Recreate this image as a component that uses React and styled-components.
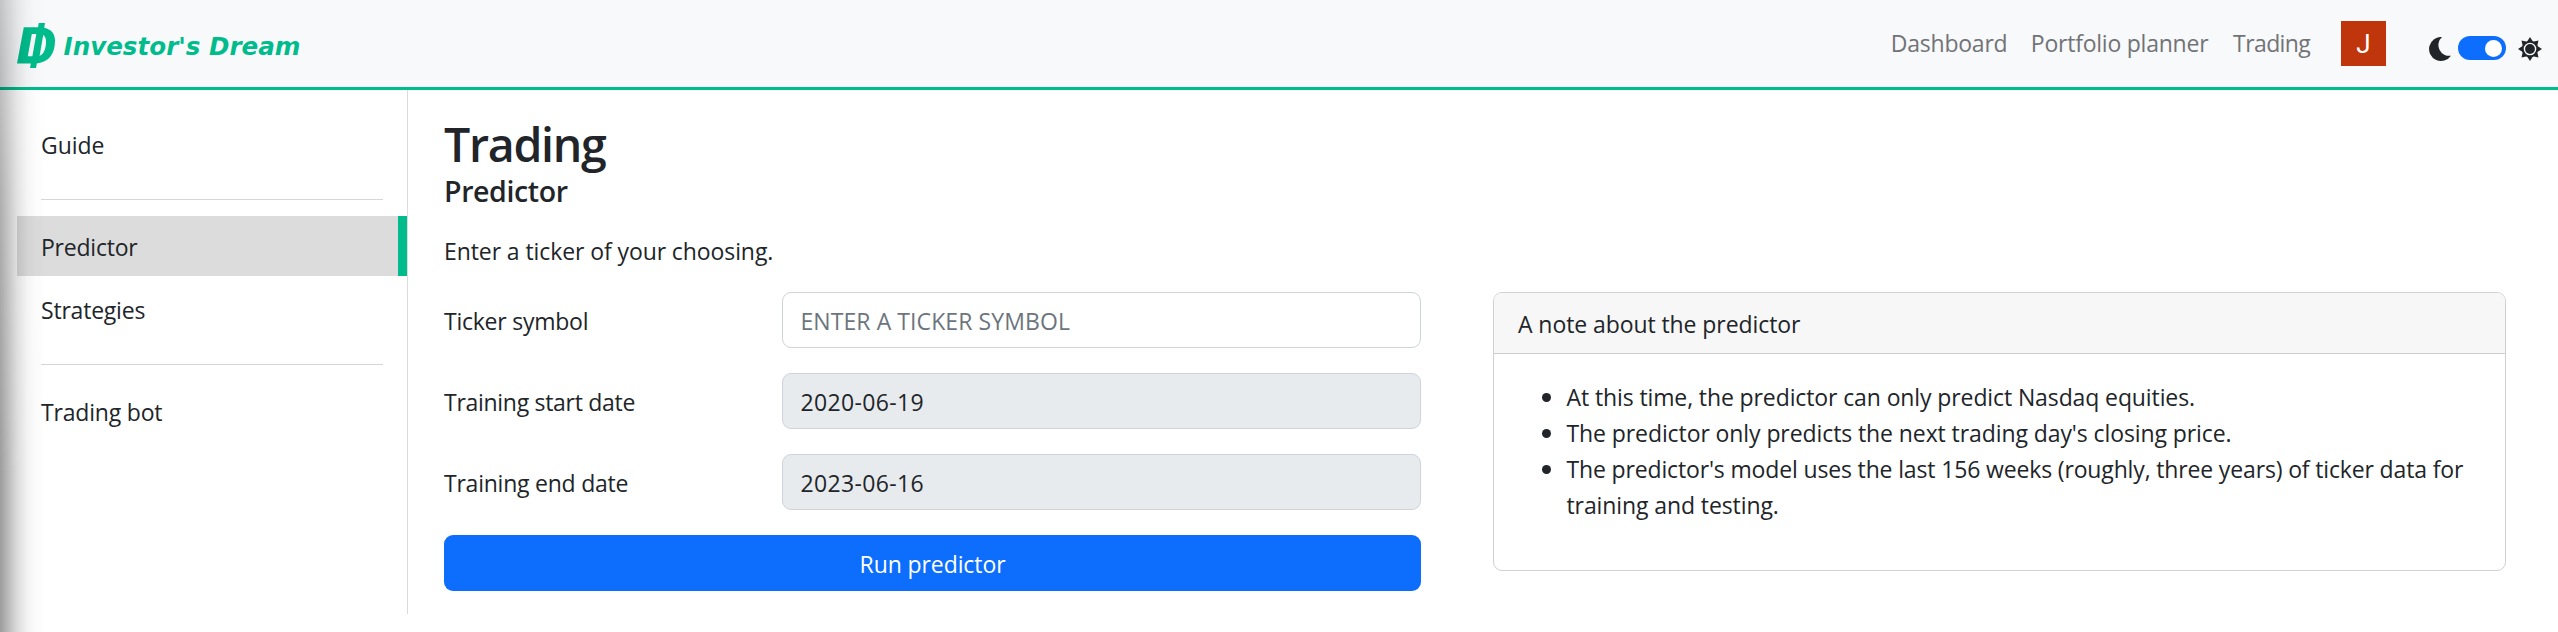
import React from 'react';
import styled, { createGlobalStyle } from 'styled-components';

const green = '#00bc8c';
const ink = '#212529';

const GlobalStyle = createGlobalStyle`
  *, *::before, *::after { box-sizing: border-box; }
  body {
    margin: 0;
    background: #fff;
    color: ${ink};
    font-family: 'Open Sans', 'Noto Sans', sans-serif;
    font-size: 23px;
    line-height: 36px;
  }
`;

const Page = styled.div`
  position: relative;
  height: 632px;
  overflow: hidden;
`;

/* Soft shade running down the left window edge */
const EdgeShade = styled.div`
  position: absolute;
  inset: 0 auto 0 0;
  width: 46px;
  pointer-events: none;
  background: linear-gradient(
    to right,
    rgba(0, 0, 0, 0.39) 0,
    rgba(0, 0, 0, 0.27) 8px,
    rgba(0, 0, 0, 0.14) 17px,
    rgba(0, 0, 0, 0.05) 27px,
    rgba(0, 0, 0, 0.015) 36px,
    rgba(0, 0, 0, 0) 46px
  );
  mask-image: linear-gradient(to bottom, rgba(0, 0, 0, 0.55) 0, rgba(0, 0, 0, 0.82) 200px, #000 480px);
`;

const Header = styled.header`
  display: flex;
  justify-content: space-between;
  height: 90px;
  padding: 0 16px 0 17px;
  background: #f8f9fb;
  border-bottom: 3px solid ${green};
`;

const Brand = styled.a`
  display: flex;
  align-items: flex-start;
  padding-top: 23px;
  color: ${green};
`;

const BrandName = styled.span`
  margin: 5px 0 0 7.5px;
  padding-top: 1px;
  font: italic bold 24.6px/36px 'DejaVu Sans', sans-serif;
  white-space: nowrap;
`;

const Nav = styled.nav`
  display: flex;
  align-items: flex-start;
`;

const NavLink = styled.a`
  width: ${(p) => p.$width}px;
  padding: 25px 0 0 0.4px;
  color: #717376;
  letter-spacing: ${(p) => p.$track}px;
  white-space: nowrap;
`;

const Avatar = styled.div`
  width: 45px;
  height: 45px;
  margin: 21px 43px 0 0;
  background: #bf360c;
  color: #fff;
  font: 26px/46px Roboto, sans-serif;
  text-align: center;
`;

const ThemeSwitch = styled.div`
  display: flex;
  align-items: center;
  height: 24px;
  margin-top: 36px;
`;

const Toggle = styled.div`
  display: flex;
  justify-content: flex-end;
  align-items: center;
  width: 48px;
  height: 24px;
  margin: 0 12px 0 7px;
  padding-right: 4px;
  border-radius: 12px;
  background: #0d6efd;
`;

const Knob = styled.span`
  width: 17px;
  height: 17px;
  border-radius: 50%;
  background: #fff;
`;

const IconWrap = styled.span`
  display: flex;
  padding-top: 2px;
`;

const Body = styled.div`
  display: flex;
`;

const Sidebar = styled.aside`
  width: 408px;
  height: 524px;
  padding: 24px 0 0 17px;
  border-right: 1px solid #dadbdd;
`;

const SideItem = styled.a`
  display: block;
  height: 60px;
  padding: 13px 24px 11px;
  letter-spacing: ${(p) => p.$track}px;
  background: ${(p) => (p.$active ? '#dcdcdc' : 'transparent')};
  border-right: 9px solid ${(p) => (p.$active ? green : 'transparent')};
  & + & { margin-top: 3px; }
`;

const Divider = styled.hr`
  height: 1px;
  margin: 25px 24px 16px;
  border: 0;
  background: #d6d7d8;
`;

const Main = styled.main`
  flex: 1;
  padding: 25px 52px 0 36px;
`;

const Title = styled.h1`
  margin: 0;
  font-size: 46.5px;
  font-weight: 600;
  line-height: 58px;
  letter-spacing: -1.3px;
`;

const Subtitle = styled.h5`
  margin: 0;
  font-size: 28.5px;
  font-weight: 600;
  line-height: 36px;
  letter-spacing: -0.38px;
`;

const Intro = styled.p`
  margin: 24px 0 23px;
  letter-spacing: -0.09px;
`;

const Columns = styled.div`
  display: flex;
  align-items: flex-start;
  gap: 72px;
`;

const Form = styled.form`
  display: flex;
  flex-direction: column;
  gap: 25px;
  width: 977px;
`;

const Field = styled.label`
  display: flex;
  height: 56px;
`;

const FieldLabel = styled.span`
  width: 338px;
  padding-top: 11px;
  letter-spacing: ${(p) => p.$track}px;
`;

const Input = styled.input`
  flex: 1;
  height: 56px;
  padding: 2px 17.4px 0;
  border: 1px solid #ced4da;
  border-radius: 9px;
  background: #fff;
  color: ${ink};
  font: inherit;
  letter-spacing: ${(p) => p.$track}px;
  &::placeholder { color: #6c757d; opacity: 1; }
  &:disabled { background: #e8ebee; }
`;

const RunButton = styled.button`
  height: 56px;
  padding: 1px 0 0;
  border: 0;
  border-radius: 9px;
  background: #0d6efd;
  color: #fff;
  font: inherit;
  letter-spacing: -0.09px;
`;

const Card = styled.section`
  width: 1013px;
  height: 279px;
  border: 1px solid #d0d1d2;
  border-radius: 9px;
  overflow: hidden;
`;

const CardHeader = styled.div`
  height: 61px;
  padding: 13px 24px 0;
  background: #f7f7f7;
  border-bottom: 1px solid #cdcecf;
  letter-spacing: -0.08px;
`;

const NoteList = styled.ul`
  margin: 0;
  padding: 25px 0 0 48px;
  list-style: none;
`;

const NoteItem = styled.li`
  display: flex;
  white-space: nowrap;
  &::before {
    content: '';
    width: 9px;
    height: 9px;
    margin: 14px 15.5px 0 0;
    border-radius: 50%;
    background: ${ink};
  }
`;

const Line = styled.span`
  display: block;
  letter-spacing: ${(p) => p.$track}px;
`;

const Logo = () => (
  <svg width="39" height="45" viewBox="0 0 39 45" fill={green}>
    <path
      fillRule="evenodd"
      d="M6.8 4.3H21L21.8 0H28L27.2 4.8C34 6.2 38 10.8 38 17.5C38 30.5 32.5 38.8 19.8 40.6L19 45H13L13.8 40.4H0ZM14.8 11L10.8 33.2H15.4L19.3 11ZM26.2 12L22.6 33C26.8 31.2 29 25.6 29 18.6C29 15.3 28 13 26.2 12Z"
    />
  </svg>
);

const Moon = () => (
  <svg width="22" height="24" viewBox="0 0 22 24" fill={ink}>
    <path d="M13 0A12 12 0 1 0 22 18.7A10.8 10.8 0 0 1 13 0Z" />
  </svg>
);

const Sun = () => (
  <svg width="24" height="24" viewBox="-12 -12 24 24" fill={ink}>
    {[0, 45, 90, 135, 180, 225, 270, 315].map((a) => (
      <path key={a} d="M-3.2 -7L0 -12L3.2 -7Z" transform={`rotate(${a})`} />
    ))}
    <circle r="7.2" fill="none" stroke={ink} strokeWidth="1.8" />
    <circle r="4.9" />
  </svg>
);

export default function App() {
  return (
    <Page>
      <GlobalStyle />
      <Header>
        <Brand>
          <Logo />
          <BrandName>Investor's Dream</BrandName>
        </Brand>
        <Nav>
          <NavLink $width={140} $track={-0.23}>Dashboard</NavLink>
          <NavLink $width={202.3} $track={-0.23}>Portfolio planner</NavLink>
          <NavLink $width={108.3} $track={-0.6}>Trading</NavLink>
          <Avatar>J</Avatar>
          <ThemeSwitch>
            <IconWrap><Moon /></IconWrap>
            <Toggle><Knob /></Toggle>
            <IconWrap><Sun /></IconWrap>
          </ThemeSwitch>
        </Nav>
      </Header>
      <Body>
        <Sidebar>
          <SideItem $track={-0.05}>Guide</SideItem>
          <Divider />
          <SideItem $active $track={-0.22}>Predictor</SideItem>
          <SideItem $track={-0.21}>Strategies</SideItem>
          <Divider />
          <SideItem $track={-0.19}>Trading bot</SideItem>
        </Sidebar>
        <Main>
          <Title>Trading</Title>
          <Subtitle>Predictor</Subtitle>
          <Intro>Enter a ticker of your choosing.</Intro>
          <Columns>
            <Form>
              <Field>
                <FieldLabel $track={-0.24}>Ticker symbol</FieldLabel>
                <Input placeholder="ENTER A TICKER SYMBOL" $track={0.09} />
              </Field>
              <Field>
                <FieldLabel $track={-0.29}>Training start date</FieldLabel>
                <Input disabled defaultValue="2020-06-19" $track={0.35} />
              </Field>
              <Field>
                <FieldLabel $track={-0.23}>Training end date</FieldLabel>
                <Input disabled defaultValue="2023-06-16" $track={0.35} />
              </Field>
              <RunButton type="button">Run predictor</RunButton>
            </Form>
            <Card>
              <CardHeader>A note about the predictor</CardHeader>
              <NoteList>
                <NoteItem>
                  <Line $track={-0.11}>At this time, the predictor can only predict Nasdaq equities.</Line>
                </NoteItem>
                <NoteItem>
                  <Line $track={-0.09}>The predictor only predicts the next trading day's closing price.</Line>
                </NoteItem>
                <NoteItem>
                  <div>
                    <Line $track={-0.15}>
                      The predictor's model uses the last 156 weeks (roughly, three years) of ticker data for
                    </Line>
                    <Line $track={-0.1}>training and testing.</Line>
                  </div>
                </NoteItem>
              </NoteList>
            </Card>
          </Columns>
        </Main>
      </Body>
      <EdgeShade />
    </Page>
  );
}
